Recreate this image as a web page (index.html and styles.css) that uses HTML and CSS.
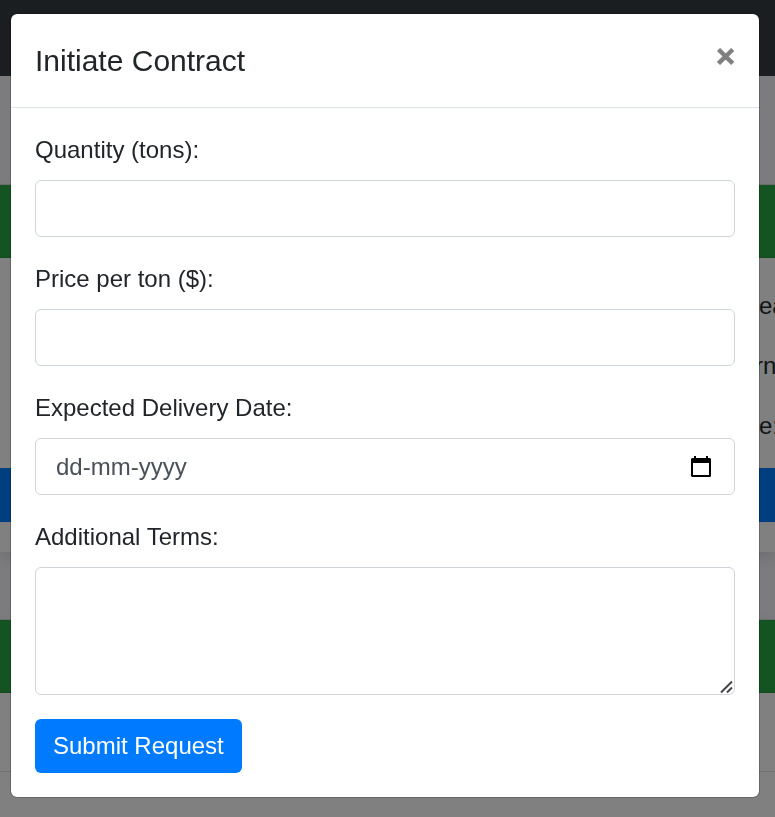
FILE: index.html
```html
<!DOCTYPE html>
<html lang="en">
<head>
<meta charset="utf-8">
<meta name="viewport" content="width=device-width, initial-scale=1">
<title>Initiate Contract</title>
<link rel="stylesheet" href="styles.css">
</head>
<body>
<div class="page">
  <div class="navbar"></div>
  <div class="listing">
    <div class="card">
      <div class="card-header"></div>
      <div class="card-body">
        <p class="detail">ea</p>
        <p class="detail detail-wide">rn</p>
        <p class="detail">e:</p>
        <div class="card-action"></div>
      </div>
    </div>
    <div class="card">
      <div class="card-header"></div>
      <div class="card-row"></div>
      <div class="card-row"></div>
    </div>
  </div>
</div>
<div class="overlay">
  <div class="modal" role="dialog" aria-modal="true" aria-labelledby="modal-title">
    <div class="modal-header">
      <h5 class="modal-title" id="modal-title">Initiate Contract</h5>
      <button class="close" type="button" aria-label="Close">×</button>
    </div>
    <form class="modal-body">
      <div class="form-group">
        <label for="quantity">Quantity (tons):</label>
        <input class="control" id="quantity" type="text" inputmode="numeric">
      </div>
      <div class="form-group">
        <label for="price">Price per ton ($):</label>
        <input class="control" id="price" type="text" inputmode="decimal">
      </div>
      <div class="form-group">
        <label for="date">Expected Delivery Date:</label>
        <div class="control date-control">
          <input class="date-input" id="date" type="text" placeholder="dd-mm-yyyy">
          <button class="date-button" type="button" aria-label="Open calendar">
            <svg viewBox="0 0 20 22" width="20" height="22" aria-hidden="true">
              <path fill="#000" fill-rule="evenodd" d="M3 0h2v2h10V0h2v2h2l1 1v17l-1 1H1l-1-1V3l1-1h2zM2 7v12h16V7z"/>
            </svg>
          </button>
        </div>
      </div>
      <div class="form-group">
        <label for="terms">Additional Terms:</label>
        <div class="terms">
          <textarea class="control" id="terms"></textarea>
          <svg class="grip" viewBox="0 0 14 14" width="14" height="14" aria-hidden="true">
            <path d="M1 12.500l11-11M7 12.500l5-5" fill="none" stroke="#444" stroke-width="2"/>
          </svg>
        </div>
      </div>
      <button class="submit" type="submit">Submit Request</button>
    </form>
  </div>
</div>
</body>
</html>
```
FILE: styles.css
```css
* {
  box-sizing: border-box;
}

body {
  margin: 0;
  color: #212529;
  font: 24px/36px "Liberation Sans", Arial, sans-serif;
}

/* Dimmed page behind the dialog */
.page {
  position: fixed;
  inset: 0;
  overflow: hidden;
  background: #7c7c7e;
}

.navbar {
  height: 76px;
  background: #1a1e21;
}

.listing {
  display: grid;
  gap: 67px;
  padding-top: 108px;
}

.card {
  border-top: 1px solid #6d6d6f;
  background: #808080;
  box-shadow: 0 6px 12px rgba(0, 0, 0, 0.1);
}

.card-header {
  height: 73px;
  border-bottom: 1px solid #124b20;
  background: #145423;
}

.card-body {
  padding: 30px 0;
}

.detail {
  margin: 0 0 24px;
  padding-left: calc(100% - 16px);
  white-space: nowrap;
  color: #111315;
}

.detail-wide {
  padding-left: calc(100% - 20px);
}

.card-action {
  height: 54px;
  background: #003e80;
}

.card-row {
  height: 79px;
  border-bottom: 1px solid #6f6f6f;
}

/* Dialog */
.overlay {
  position: relative;
  padding: 13px 15px 19px 10px;
}

.modal {
  max-width: 750px;
  margin: 0 auto;
  border: 1px solid rgba(0, 0, 0, 0.2);
  border-radius: 7px;
  background: #fff;
  background-clip: padding-box;
}

.modal-header {
  display: flex;
  align-items: flex-start;
  justify-content: space-between;
  padding: 24px;
  border-bottom: 1px solid #dee2e6;
}

.modal-title {
  margin: 0;
  font-size: 30px;
  font-weight: 400;
  line-height: 45px;
}

.close {
  padding: 0;
  border: 0;
  background: none;
  color: #000;
  font: 700 32px/36px "Liberation Sans", Arial, sans-serif;
  -webkit-text-stroke: 1px #000;
  opacity: 0.5;
}

.modal-body {
  padding: 24px;
}

.form-group {
  margin-bottom: 24px;
}

label {
  display: block;
  margin-bottom: 12px;
}

.control {
  display: block;
  width: 100%;
  height: 57px;
  padding: 9px 18px;
  border: 1px solid #ced4da;
  border-radius: 6px;
  background: #fff;
  color: #495057;
  font: inherit;
}

.date-control {
  display: flex;
  align-items: center;
  padding: 0 23px 0 20px;
}

.date-input {
  flex: 1;
  min-width: 0;
  padding: 0;
  border: 0;
  background: none;
  color: #495057;
  font: inherit;
}

.date-input::placeholder {
  color: #495057;
  opacity: 1;
}

.date-button {
  display: flex;
  padding: 0;
  border: 0;
  background: none;
}

.terms {
  position: relative;
}

textarea.control {
  height: 128px;
  resize: none;
}

.grip {
  position: absolute;
  right: 1px;
  bottom: 1px;
}

.submit {
  display: block;
  padding: 9px 18px;
  border: 0;
  border-radius: 6px;
  background: #007bff;
  color: #fff;
  font: inherit;
}
```
